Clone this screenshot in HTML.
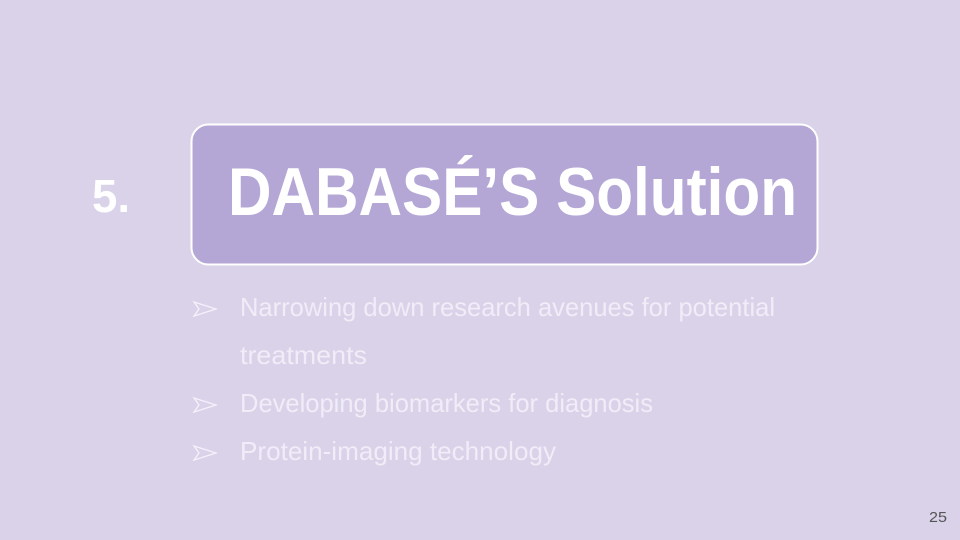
<!DOCTYPE html>
<html><head><meta charset="utf-8"><style>
html,body{margin:0;padding:0;background:#d9d2e9;width:960px;height:540px;overflow:hidden}
</style></head><body>
<svg width="960" height="540" xmlns="http://www.w3.org/2000/svg" style="display:block">
<rect width="960" height="540" fill="#d9d2e9"/>
<rect x="191.5" y="124.5" width="626" height="140" rx="17" fill="#b4a7d6" stroke="#ffffff" stroke-width="2"/>
<text x="92" y="212" font-family="Liberation Sans, sans-serif" font-weight="bold" font-size="46" fill="#ffffff" textLength="38" lengthAdjust="spacingAndGlyphs">5.</text>
<text x="228" y="215" font-family="Liberation Sans, sans-serif" font-weight="bold" font-size="68" fill="#ffffff" textLength="569" lengthAdjust="spacingAndGlyphs">DABASÉ’S Solution</text>
<g font-family="Liberation Sans, sans-serif" font-size="26" fill="#f1ecf7">
<path d="M194 302 L216 309 L194 316 L199 309 Z" fill="none" stroke="#f5f2fa" stroke-width="1.3"/>
<text x="240" y="316" textLength="535" lengthAdjust="spacingAndGlyphs">Narrowing down research avenues for potential</text>
<text x="240" y="364" textLength="127" lengthAdjust="spacingAndGlyphs">treatments</text>
<path d="M194 398 L216 405 L194 412 L199 405 Z" fill="none" stroke="#f5f2fa" stroke-width="1.3"/>
<text x="240" y="412" textLength="413" lengthAdjust="spacingAndGlyphs">Developing biomarkers for diagnosis</text>
<path d="M194 446 L216 453 L194 460 L199 453 Z" fill="none" stroke="#f5f2fa" stroke-width="1.3"/>
<text x="240" y="460" textLength="316" lengthAdjust="spacingAndGlyphs">Protein-imaging technology</text>
</g>
<text x="929" y="522" font-family="Liberation Sans, sans-serif" font-size="15" fill="#555555" textLength="18" lengthAdjust="spacingAndGlyphs">25</text>
</svg>
</body></html>
